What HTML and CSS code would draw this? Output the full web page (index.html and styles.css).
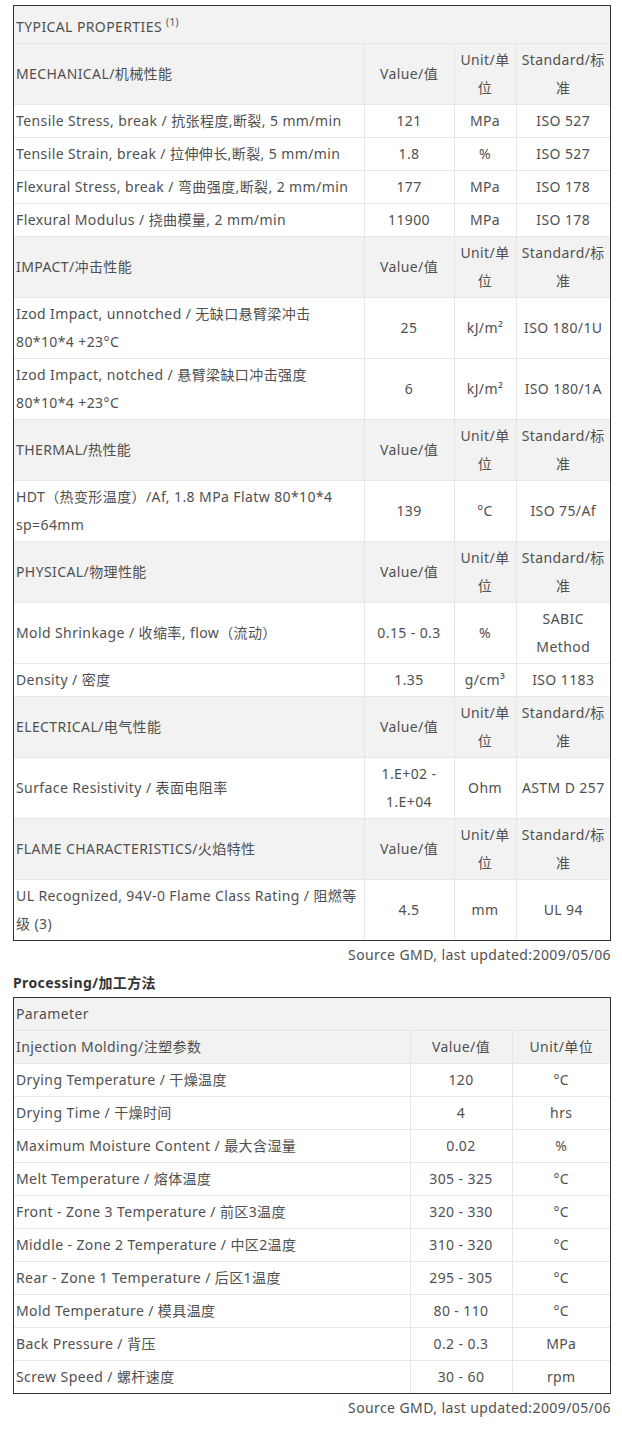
FILE: index.html
```html
<!DOCTYPE html>
<html lang="zh">
<head>
<meta charset="utf-8">
<title>Typical Properties</title>
<link rel="stylesheet" href="styles.css">
</head>
<body>
<div class="page">
  <div class="frame">
  <table class="props">
    <colgroup>
      <col class="c-label"><col class="c-value"><col class="c-unit"><col class="c-std">
    </colgroup>
    <tr class="title"><td colspan="4">TYPICAL PROPERTIES <sup>(1)</sup></td></tr>

    <tr class="head"><td>MECHANICAL/机械性能</td><td class="ctr">Value/值</td><td class="ctr nw">Unit/单<br>位</td><td class="ctr nw">Standard/标<br>准</td></tr>
    <tr><td>Tensile Stress, break / 抗张程度,断裂, 5 mm/min</td><td class="ctr">121</td><td class="ctr">MPa</td><td class="ctr">ISO 527</td></tr>
    <tr><td>Tensile Strain, break / 拉伸伸长,断裂, 5 mm/min</td><td class="ctr">1.8</td><td class="ctr">%</td><td class="ctr">ISO 527</td></tr>
    <tr><td>Flexural Stress, break / 弯曲强度,断裂, 2 mm/min</td><td class="ctr">177</td><td class="ctr">MPa</td><td class="ctr">ISO 178</td></tr>
    <tr><td>Flexural Modulus / 挠曲模量, 2 mm/min</td><td class="ctr">11900</td><td class="ctr">MPa</td><td class="ctr">ISO 178</td></tr>

    <tr class="head"><td>IMPACT/冲击性能</td><td class="ctr">Value/值</td><td class="ctr nw">Unit/单<br>位</td><td class="ctr nw">Standard/标<br>准</td></tr>
    <tr><td>Izod Impact, unnotched / 无缺口悬臂梁冲击<br>80*10*4 +23°C</td><td class="ctr">25</td><td class="ctr">kJ/m²</td><td class="ctr nw">ISO 180/1U</td></tr>
    <tr><td>Izod Impact, notched / 悬臂梁缺口冲击强度<br>80*10*4 +23°C</td><td class="ctr">6</td><td class="ctr">kJ/m²</td><td class="ctr nw">ISO 180/1A</td></tr>

    <tr class="head"><td>THERMAL/热性能</td><td class="ctr">Value/值</td><td class="ctr nw">Unit/单<br>位</td><td class="ctr nw">Standard/标<br>准</td></tr>
    <tr><td>HDT（热变形温度）/Af, 1.8 MPa Flatw 80*10*4<br>sp=64mm</td><td class="ctr">139</td><td class="ctr">°C</td><td class="ctr">ISO 75/Af</td></tr>

    <tr class="head"><td>PHYSICAL/物理性能</td><td class="ctr">Value/值</td><td class="ctr nw">Unit/单<br>位</td><td class="ctr nw">Standard/标<br>准</td></tr>
    <tr><td>Mold Shrinkage / 收缩率, flow（流动）</td><td class="ctr">0.15 - 0.3</td><td class="ctr">%</td><td class="ctr">SABIC<br>Method</td></tr>
    <tr><td>Density / 密度</td><td class="ctr">1.35</td><td class="ctr">g/cm³</td><td class="ctr">ISO 1183</td></tr>

    <tr class="head"><td>ELECTRICAL/电气性能</td><td class="ctr">Value/值</td><td class="ctr nw">Unit/单<br>位</td><td class="ctr nw">Standard/标<br>准</td></tr>
    <tr><td>Surface Resistivity / 表面电阻率</td><td class="ctr">1.E+02 -<br>1.E+04</td><td class="ctr">Ohm</td><td class="ctr nw">ASTM D 257</td></tr>

    <tr class="head"><td>FLAME CHARACTERISTICS/火焰特性</td><td class="ctr">Value/值</td><td class="ctr nw">Unit/单<br>位</td><td class="ctr nw">Standard/标<br>准</td></tr>
    <tr><td>UL Recognized, 94V-0 Flame Class Rating / 阻燃等<br>级 (3)</td><td class="ctr">4.5</td><td class="ctr">mm</td><td class="ctr">UL 94</td></tr>
  </table>
  </div>
  <p class="source">Source GMD, last updated:2009/05/06</p>

  <h4 class="section">Processing/加工方法</h4>
  <div class="frame">
  <table class="proc">
    <colgroup>
      <col class="p-label"><col class="p-value"><col class="p-unit">
    </colgroup>
    <tr class="title"><td colspan="3">Parameter</td></tr>
    <tr class="head"><td>Injection Molding/注塑参数</td><td class="ctr">Value/值</td><td class="ctr">Unit/单位</td></tr>
    <tr><td>Drying Temperature / 干燥温度</td><td class="ctr">120</td><td class="ctr">°C</td></tr>
    <tr><td>Drying Time / 干燥时间</td><td class="ctr">4</td><td class="ctr">hrs</td></tr>
    <tr><td>Maximum Moisture Content / 最大含湿量</td><td class="ctr">0.02</td><td class="ctr">%</td></tr>
    <tr><td>Melt Temperature / 熔体温度</td><td class="ctr">305 - 325</td><td class="ctr">°C</td></tr>
    <tr><td>Front - Zone 3 Temperature / 前区3温度</td><td class="ctr">320 - 330</td><td class="ctr">°C</td></tr>
    <tr><td>Middle - Zone 2 Temperature / 中区2温度</td><td class="ctr">310 - 320</td><td class="ctr">°C</td></tr>
    <tr><td>Rear - Zone 1 Temperature / 后区1温度</td><td class="ctr">295 - 305</td><td class="ctr">°C</td></tr>
    <tr><td>Mold Temperature / 模具温度</td><td class="ctr">80 - 110</td><td class="ctr">°C</td></tr>
    <tr><td>Back Pressure / 背压</td><td class="ctr">0.2 - 0.3</td><td class="ctr">MPa</td></tr>
    <tr><td>Screw Speed / 螺杆速度</td><td class="ctr">30 - 60</td><td class="ctr">rpm</td></tr>
  </table>
  </div>
  <p class="source">Source GMD, last updated:2009/05/06</p>
</div>
</body>
</html>
```

FILE: styles.css
```css
html, body {
  margin: 0;
  padding: 0;
  background: #ffffff;
}

.page {
  padding: 5px 0 0 13px;
  width: 598px;
  font-family: "Noto Sans", "Noto Sans CJK SC", sans-serif;
  font-size: 14px;
  line-height: 28px;
  letter-spacing: 0.4px;
  color: #505050;
}

.frame {
  border: 1px solid #333333;
  width: 596px;
}

table {
  width: 596px;
  border-collapse: collapse;
  table-layout: fixed;
  border-style: hidden;
}

td {
  border: 1px solid #e6e6e6;
  padding: 2px 2px;
  vertical-align: middle;
  text-align: left;
}

.ctr { text-align: center; }
.nw { white-space: nowrap; }

tr.title td,
tr.head td {
  background: #f2f2f2;
}

.props tr.title td {
  height: 33px;
  padding-top: 4px;
  padding-bottom: 0;
}

sup {
  font-size: 10px;
  line-height: 0;
}

.c-label { width: 350px; }
.c-value { width: 90px; }
.c-unit { width: 62px; }
.c-std { width: 94px; }

.p-label { width: 396px; }
.p-value { width: 102px; }
.p-unit { width: 98px; }

.source {
  margin: 0;
  text-align: right;
}

.section {
  margin: 0;
  font-size: 14px;
  font-weight: bold;
  line-height: 28px;
  color: #333333;
}
```
